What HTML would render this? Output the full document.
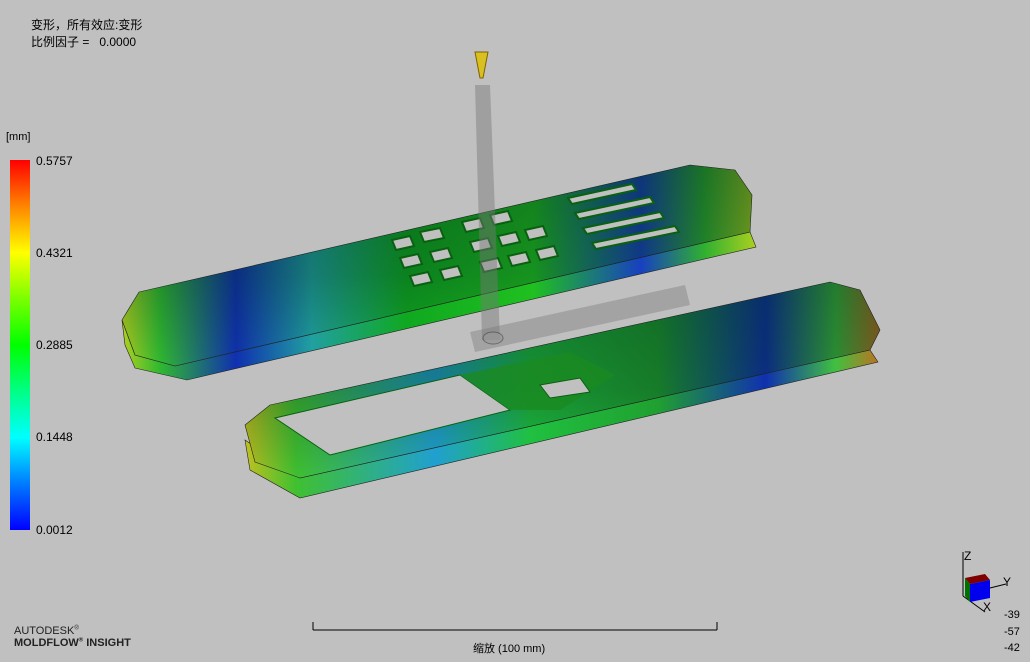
<!DOCTYPE html>
<html><head><meta charset="utf-8"><style>
body{margin:0;width:1030px;height:662px;background:#c0c0c0;overflow:hidden;position:relative;font-family:"Liberation Sans","Noto Sans CJK SC",sans-serif;color:#000}
.t{position:absolute;font-size:12px;white-space:nowrap}
</style></head><body>
<div class="t" style="left:31px;top:16px">变形，所有效应:变形</div>
<div class="t" style="left:31px;top:33px">比例因子 =&nbsp;&nbsp; 0.0000</div>
<div class="t" style="left:6px;top:131px;font-size:11px">[mm]</div>
<div style="position:absolute;left:10px;top:160px;width:20px;height:370px;background:linear-gradient(to bottom,#ff0000,#ff8000 12%,#ffff00 25%,#80ff00 37%,#00ff00 50%,#00ff80 62%,#00ffff 75%,#0080ff 87%,#0000ff)"></div>
<div class="t" style="left:36px;top:154px">0.5757</div>
<div class="t" style="left:36px;top:246px">0.4321</div>
<div class="t" style="left:36px;top:338px">0.2885</div>
<div class="t" style="left:36px;top:430px">0.1448</div>
<div class="t" style="left:36px;top:523px">0.0012</div>
<div class="t" style="left:14px;top:625px;font-size:11px;color:#222">AUTODESK<sup style="font-size:6px">®</sup></div>
<div class="t" style="left:14px;top:637px;font-size:11px;font-weight:bold;color:#222">MOLDFLOW<sup style="font-size:6px">®</sup> INSIGHT</div>
<div class="t" style="left:473px;top:640px;font-size:11px">缩放 (100 mm)</div>
<div class="t" style="left:1004px;top:609px;font-size:11px">-39</div>
<div class="t" style="left:1004px;top:626px;font-size:11px">-57</div>
<div class="t" style="left:1004px;top:642px;font-size:11px">-42</div>
<svg width="1030" height="662" style="position:absolute;left:0;top:0">
<defs>
<linearGradient id="g1" x1="122" y1="0" x2="755" y2="0" gradientUnits="userSpaceOnUse">
<stop offset="0" stop-color="#b0d020"/><stop offset=".06" stop-color="#30b830"/><stop offset=".18" stop-color="#1030b0"/><stop offset=".3" stop-color="#20a0a0"/><stop offset=".45" stop-color="#10a820"/><stop offset=".65" stop-color="#20c020"/><stop offset=".82" stop-color="#1840c0"/><stop offset=".92" stop-color="#30b030"/><stop offset="1" stop-color="#a8d020"/></linearGradient>
<linearGradient id="g2" x1="245" y1="0" x2="880" y2="0" gradientUnits="userSpaceOnUse">
<stop offset="0" stop-color="#c0c020"/><stop offset=".08" stop-color="#40c030"/><stop offset=".3" stop-color="#20a0d0"/><stop offset=".45" stop-color="#20c040"/><stop offset=".65" stop-color="#20a030"/><stop offset=".82" stop-color="#1030b0"/><stop offset=".93" stop-color="#40c040"/><stop offset="1" stop-color="#c07020"/></linearGradient>
<linearGradient id="sh" x1="0" y1="0" x2="0" y2="1">
<stop offset="0" stop-color="#002818" stop-opacity=".45"/><stop offset=".55" stop-color="#002818" stop-opacity=".3"/><stop offset="1" stop-color="#002818" stop-opacity="0"/></linearGradient>
</defs>
<!-- top plate -->
<polygon points="122,320 135,355 175,366 750,232 756,247 187,380 135,368 125,345" fill="url(#g1)" stroke="#222" stroke-width=".6"/>
<polygon points="139,292 690,165 735,170 752,195 750,232 175,366 135,355 122,320" fill="url(#g1)" stroke="#222" stroke-width=".6"/>
<polygon points="139,292 690,165 735,170 752,195 750,232 175,366 135,355 122,320" fill="url(#sh)"/>
<g fill="#c0c0c0" stroke="#0a6010" stroke-width="2">
<polygon points="392,240 410,236 414,246 396,250"/><polygon points="420,232 440,228 444,238 424,242"/><polygon points="462,222 480,218 484,228 466,232"/><polygon points="490,215 508,211 512,221 494,225"/>
<polygon points="400,258 418,254 422,264 404,268"/><polygon points="430,252 448,248 452,258 434,262"/><polygon points="470,242 488,238 492,248 474,252"/><polygon points="498,236 516,232 520,242 502,246"/><polygon points="525,230 543,226 547,236 529,240"/>
<polygon points="410,276 428,272 432,282 414,286"/><polygon points="440,270 458,266 462,276 444,280"/><polygon points="480,262 498,258 502,268 484,272"/><polygon points="508,256 526,252 530,262 512,266"/><polygon points="536,250 554,246 558,256 540,260"/>
<polygon points="568,198 632,184 636,190 572,204"/><polygon points="575,213 650,197 654,203 579,219"/><polygon points="583,228 660,212 664,218 587,234"/><polygon points="592,243 675,226 679,232 596,249"/>
</g>
<!-- bottom plate -->
<polygon points="245,440 300,478 870,350 878,362 300,498 250,470" fill="url(#g2)" stroke="#222" stroke-width=".6"/>
<polygon points="270,405 830,282 860,290 880,330 870,350 300,478 255,462 245,425" fill="url(#g2)" stroke="#222" stroke-width=".6"/>
<polygon points="270,405 830,282 860,290 880,330 870,350 300,478 255,462 245,425" fill="url(#sh)"/>
<polygon points="275,418 460,375 510,410 330,455" fill="#c0c0c0" stroke="#0a6010"/>
<polygon points="460,375 570,352 615,375 560,410 510,410" fill="#1a8a20" opacity=".8"/>
<polygon points="540,385 580,378 590,392 550,398" fill="#c0c0c0" stroke="#0a6010"/>
<!-- sprue -->
<polygon points="475,85 490,85 500,340 482,340" fill="#777" opacity=".45"/>
<polygon points="470,332 685,285 690,305 475,352" fill="#777" opacity=".4"/>
<ellipse cx="493" cy="338" rx="10" ry="6" fill="#999" stroke="#444" opacity=".6"/>
<polygon points="475,52 488,52 483,78 480,78" fill="#d8c020" stroke="#806000"/>
<line x1="313" y1="630" x2="717" y2="630" stroke="#000"/>
<line x1="313" y1="622" x2="313" y2="630" stroke="#000"/><line x1="717" y1="622" x2="717" y2="630" stroke="#000"/>
<!-- axes -->
<line x1="963" y1="552" x2="963" y2="596" stroke="#000"/>
<line x1="963" y1="596" x2="985" y2="612" stroke="#000"/>
<line x1="990" y1="588" x2="1006" y2="584" stroke="#000"/>
<polygon points="965,578 985,574 990,580 970,584" fill="#800000"/>
<polygon points="965,578 970,584 970,602 965,596" fill="#007000"/>
<polygon points="970,584 990,580 990,598 970,602" fill="#0000ee"/>
<text x="964" y="560" font-size="12" font-family="Liberation Sans">Z</text>
<text x="1003" y="586" font-size="12" font-family="Liberation Sans">Y</text>
<text x="983" y="611" font-size="12" font-family="Liberation Sans">X</text>
</svg>
</body></html>
